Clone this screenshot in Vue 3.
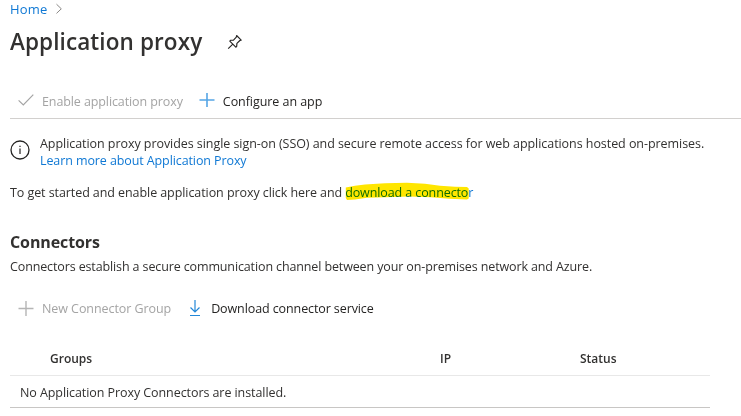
<script setup>
const columns = ['Groups', 'IP', 'Status']
</script>

<template>
  <main class="page">
    <nav class="breadcrumb">
      <a class="home">Home</a>
      <svg width="8" height="12" viewBox="0 0 8 12"><path d="M1.5 1.2 6.3 5.8 1.5 10.4" fill="none" stroke="#8a8886" /></svg>
    </nav>
    <header class="title">
      <h1>Application proxy</h1>
      <svg width="16" height="16" viewBox="0 0 16 16" fill="none" stroke="#252423" stroke-width="1.15" stroke-linejoin="round">
        <path d="M9.6 1.5 14.2 6.1 12.9 6.5 9.9 9.4 9.7 12.4 8.8 13.2 2.8 7.1 3.7 6.2 6.5 6.1 9.3 3.2Z M5.6 10.3 1.2 14.6" />
      </svg>
    </header>
    <div class="toolbar top">
      <button class="cmd disabled first">
        <svg width="16" height="16" viewBox="0 0 16 16"><path d="M.6 7.4 5.3 11.9 15.3 1.6" fill="none" stroke="#a4a4a4" stroke-width="1.2" /></svg>
        <span class="enable">Enable application proxy</span>
      </button>
      <button class="cmd">
        <svg width="16" height="16" viewBox="0 0 16 16"><path d="M8 0V14M.5 7H15.5" fill="none" stroke="#55a5e5" stroke-width="1.6" /></svg>
        <span class="configure">Configure an app</span>
      </button>
    </div>
    <section class="info">
      <svg width="20" height="20" viewBox="0 0 20 20"><circle cx="10" cy="10" r="9" fill="none" stroke="#252423" stroke-width="1.3" /><path d="M10 8.5V14M10 5.7V7" stroke="#252423" stroke-width="1.2" /></svg>
      <div>
        <p class="provides">Application proxy provides single sign-on (SSO) and secure remote access for web applications hosted on-premises.</p>
        <p><a class="learn">Learn more about Application Proxy</a></p>
      </div>
    </section>
    <p class="start">
      <span class="started">To get started and enable application proxy click here and</span>
      <a class="marked">
        download a connector
        <svg class="marker" width="126" height="19" viewBox="0 0 126 19"><path d="M.8 5.5 10 3.8 20 2.5 40 1.3 62 .8 80 1.7 95 3.7 110 4.8 122 5 123.7 6.5V16.5L122 17.5 104 16.8 86 15.2 64 14.5 40 15.2 22 15.8 10 17.5 2 18 .8 16Z" fill="#ffe600" /></svg>
      </a>
    </p>
    <h2>Connectors</h2>
    <p class="desc">Connectors establish a secure communication channel between your on-premises network and Azure.</p>
    <div class="toolbar groupbar">
      <button class="cmd disabled first">
        <svg width="16" height="16" viewBox="0 0 16 16"><path d="M8 0V15M.5 7.5H15.5" fill="none" stroke="#b5b5b5" stroke-width="1.4" /></svg>
        <span class="newgroup">New Connector Group</span>
      </button>
      <button class="cmd download">
        <svg width="12" height="17" viewBox="0 0 12 17" fill="none" stroke="#2488d8" stroke-width="1.2"><path d="M6 0V12M1.5 7.5 6 12 10.5 7.5M1 15.5H11" /></svg>
        <span class="service">Download connector service</span>
      </button>
    </div>
    <div class="table">
      <div class="row head"><span v-for="c in columns" :key="c" :class="c.toLowerCase()">{{ c }}</span></div>
      <div class="row empty"><span class="none">No Application Proxy Connectors are installed.</span></div>
    </div>
  </main>
</template>

<style>
body { background: #fff; overflow: hidden; }
</style>
<style scoped>
.page { box-sizing: border-box; width: 741px; height: 416px; padding-left: 10px; background: #fff; color: #323130; font: 12.5px/17px "Open Sans", "Noto Sans", sans-serif; white-space: nowrap; overflow: hidden; }
h1, h2, p { margin: 0; }
a { color: #0f78d4; }
.breadcrumb { display: flex; align-items: center; gap: 7px; height: 18px; }
.home { width: 38px; font-size: 13px; letter-spacing: .2px; }
.title { display: flex; align-items: center; height: 48px; gap: 25px; }
h1 { width: 192px; font: 600 22.5px/30px "Open Sans", sans-serif; letter-spacing: .1px; color: #323130; }
.toolbar { display: flex; align-items: center; }
.top { height: 53px; border-bottom: 1px solid #d2d0ce; box-sizing: border-box; padding-top: 18px; }
.cmd { display: flex; align-items: center; gap: 8px; border: 0; padding: 0; background: none; font: inherit; color: #252423; }
.first { margin-left: 8px; margin-right: 16px; }
.disabled { color: #a4a4a4; }
.enable { letter-spacing: -.1px; }
.configure { letter-spacing: -.06px; }
.info { display: flex; align-items: center; height: 34px; gap: 10px; padding-top: 16px; }
.info svg { margin-bottom: 4px; }
.provides { letter-spacing: -.057px; }
.learn { letter-spacing: -.1px; }
.start { display: flex; gap: 3px; margin-top: 15px; height: 18px; }
.started { letter-spacing: -.075px; }
.marked { position: relative; letter-spacing: -.1px; }
.marker { position: absolute; left: 0; top: -2px; mix-blend-mode: multiply; }
h2 { margin-top: 29px; font: 700 16px/22px "Open Sans", sans-serif; letter-spacing: -.1px; }
.desc { margin-top: 5px; letter-spacing: -.125px; }
.groupbar { height: 17px; margin-top: 25px; }
.newgroup { letter-spacing: -.07px; }
.service { letter-spacing: -.1px; }
.download { gap: 10px; margin-left: 2px; }
.table { width: 700px; margin-top: 30px; }
.row { display: flex; box-sizing: border-box; align-items: center; }
.head { height: 29px; padding: 0 0 5px 40px; border-bottom: 1px solid #e8e8e8; font-weight: 600; font-size: 12px; }
.head .groups { width: 390px; }
.head .ip { width: 140px; }
.empty { height: 32px; padding: 2px 0 0 10px; border-bottom: 1px solid #c8c6c4; }
.none { letter-spacing: -.075px; }
</style>
